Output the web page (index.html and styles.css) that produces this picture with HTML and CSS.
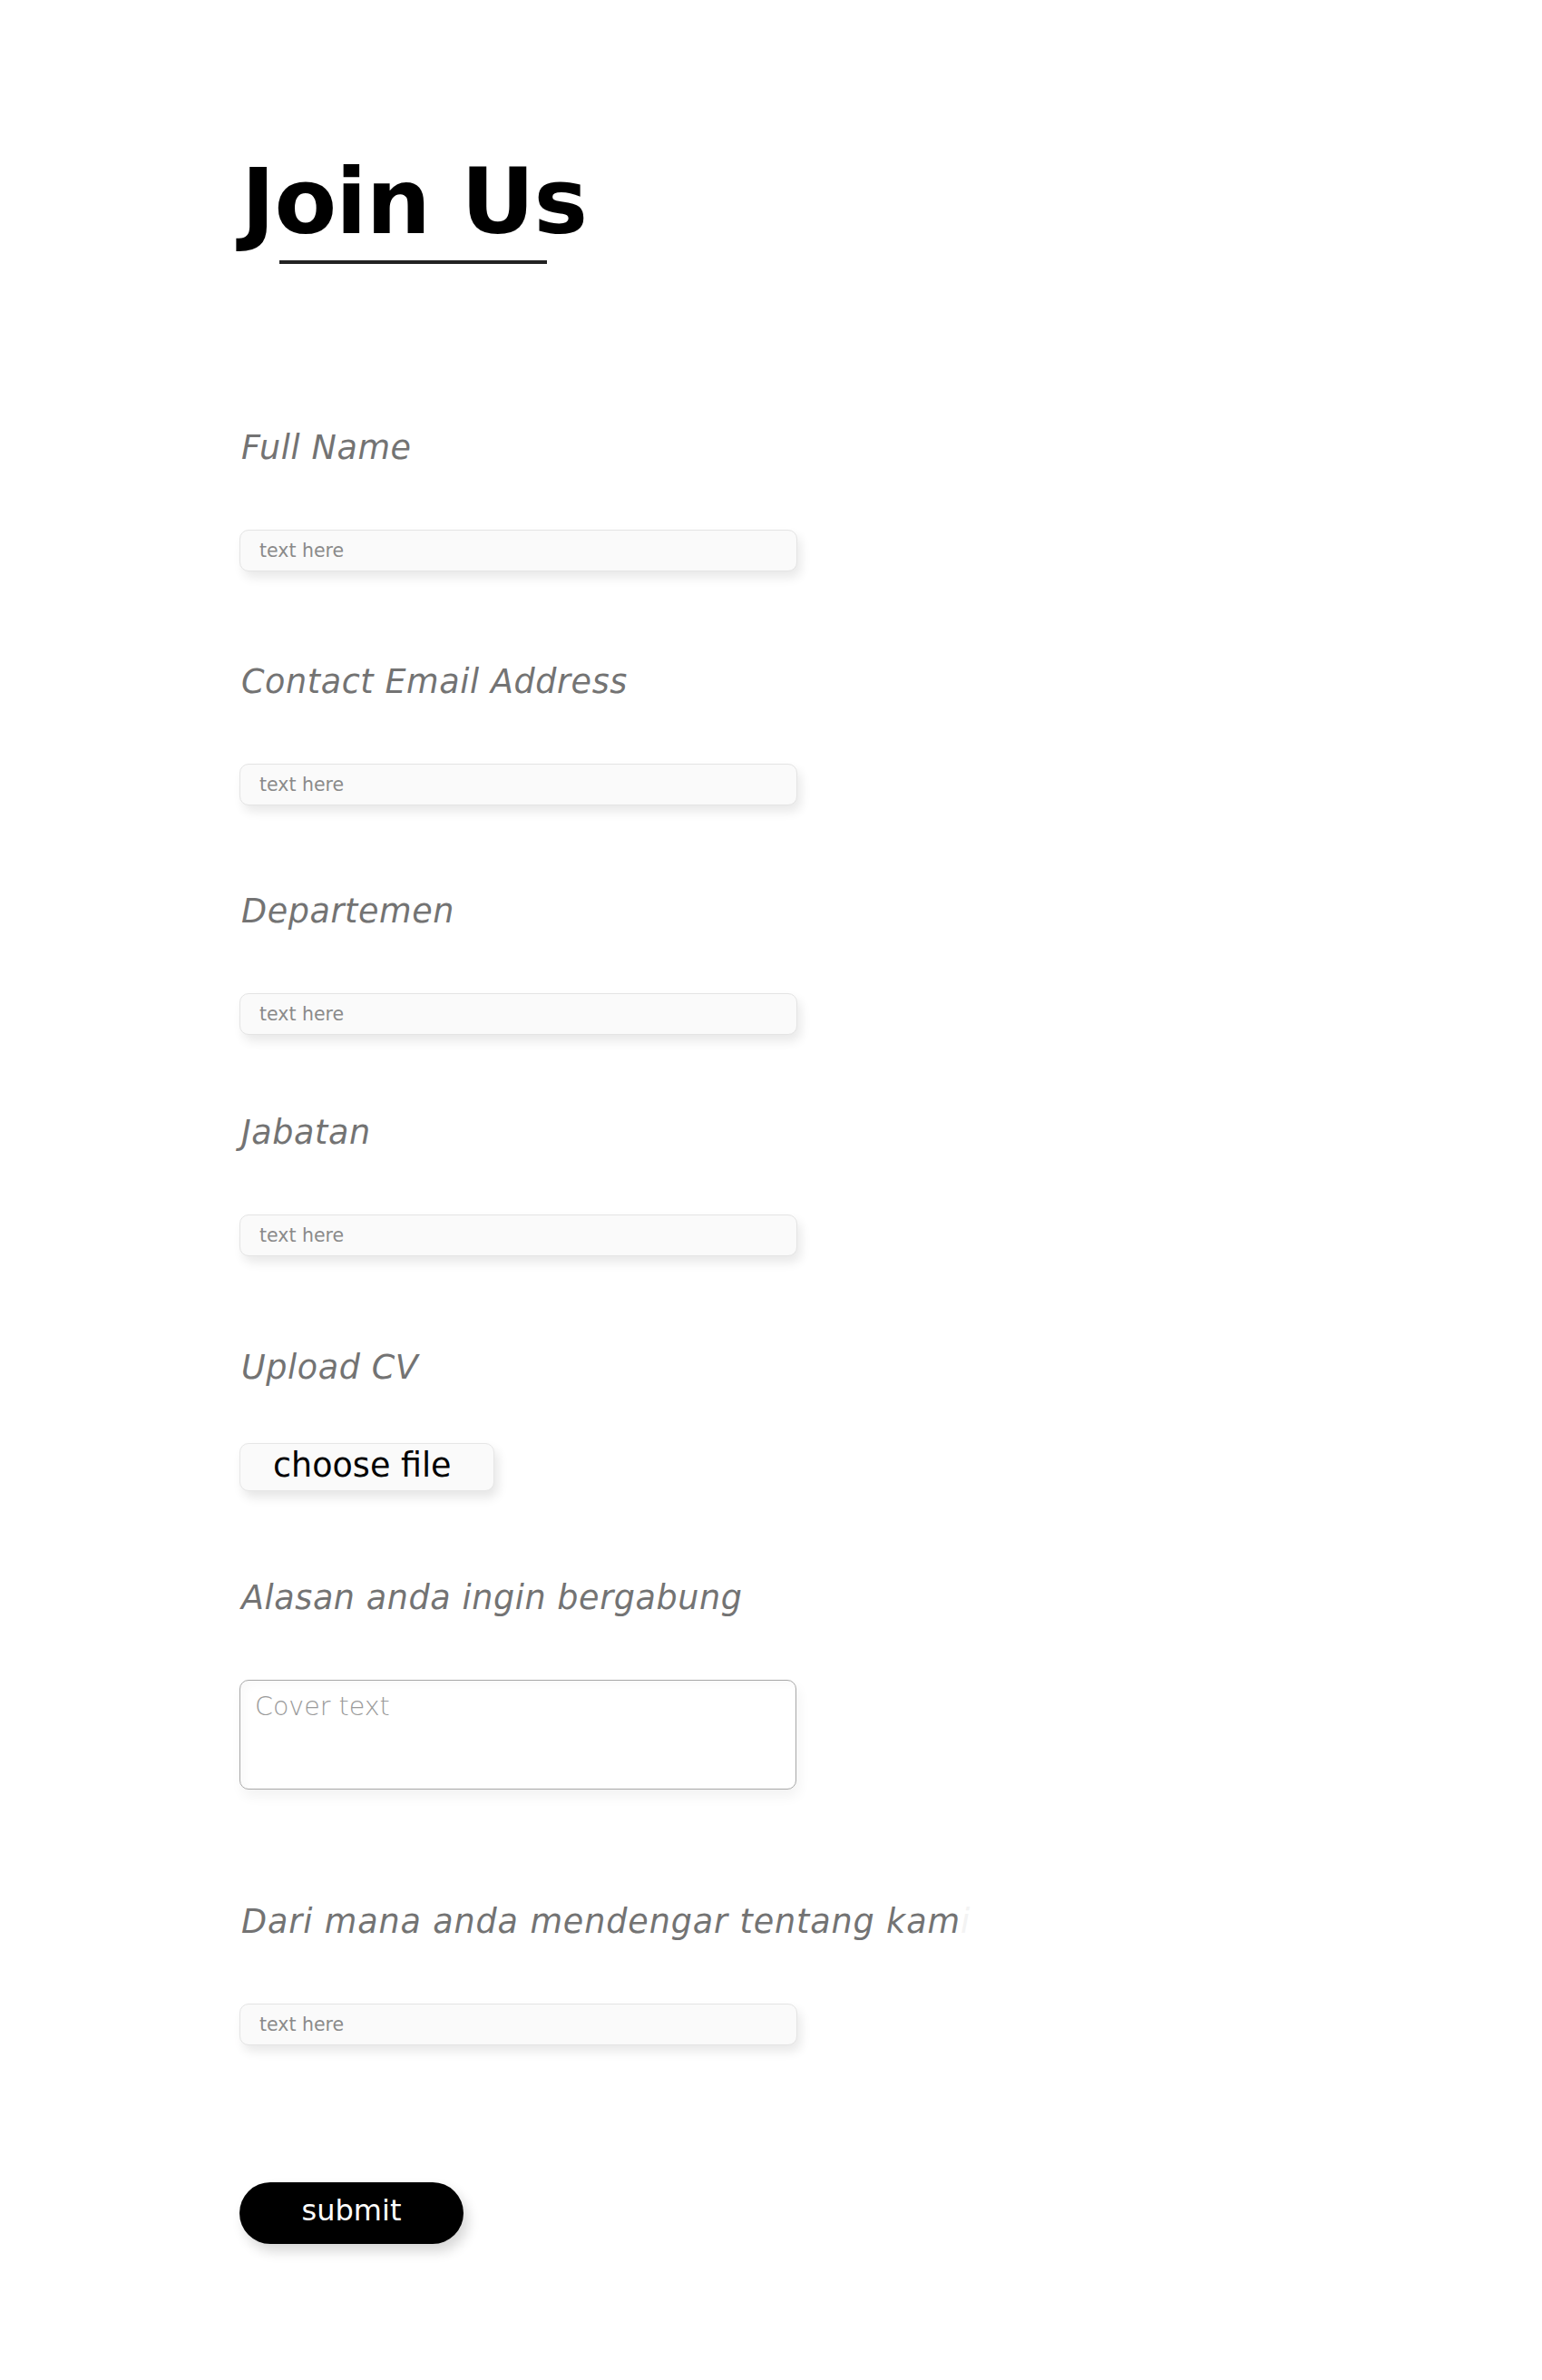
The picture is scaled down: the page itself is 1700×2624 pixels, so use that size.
FILE: index.html
```html
<!DOCTYPE html>
<html lang="id">
<head>
<meta charset="utf-8">
<title>Join Us</title>
<link rel="stylesheet" href="styles.css">
</head>
<body>
<main class="page">
  <h1 class="title">Join Us</h1>
  <div class="title-rule"></div>

  <form class="form">
    <div class="field field--first">
      <label class="field-label" for="name">Full Name</label>
      <input class="text-input" id="name" type="text" placeholder="text here">
    </div>

    <div class="field field--email">
      <label class="field-label" for="email">Contact Email Address</label>
      <input class="text-input" id="email" type="email" placeholder="text here">
    </div>

    <div class="field field--dept">
      <label class="field-label" for="dept">Departemen</label>
      <input class="text-input" id="dept" type="text" placeholder="text here">
    </div>

    <div class="field field--role">
      <label class="field-label" for="role">Jabatan</label>
      <input class="text-input" id="role" type="text" placeholder="text here">
    </div>

    <div class="field field--cv">
      <span class="field-label field-label--short">Upload CV</span>
      <label class="file-btn">choose file<input class="file-input" type="file"></label>
    </div>

    <div class="field field--reason">
      <label class="field-label" for="reason">Alasan anda ingin bergabung</label>
      <textarea class="text-area" id="reason" placeholder="Cover text"></textarea>
    </div>

    <div class="field field--source">
      <label class="field-label field-label--long" for="source">Dari mana anda mendengar tentang kam<span class="fade">i</span></label>
      <input class="text-input" id="source" type="text" placeholder="text here">
    </div>

    <button class="submit-btn" type="button">submit</button>
  </form>
</main>
</body>
</html>
```

FILE: styles.css
```css
* {
  box-sizing: border-box;
}

html, body {
  margin: 0;
  background: #ffffff;
}

body {
  font-family: "DejaVu Sans", "Noto Sans", sans-serif;
  color: #000;
}

.page {
  padding: 173px 0 120px 264px;
}

.title {
  margin: 0 0 0 2px;
  font-family: "DejaVu Sans", sans-serif;
  font-weight: 700;
  font-size: 100px;
  line-height: 100px;
  letter-spacing: -0.8px;
  color: #000;
}

.title-rule {
  width: 295px;
  height: 4px;
  margin: 14px 0 0 44px;
  background: #222222;
}

.form {
  display: flex;
  flex-direction: column;
  align-items: flex-start;
}

.field {
  display: flex;
  flex-direction: column;
  align-items: flex-start;
}

.field--first { margin-top: 181px; }
.field--email { margin-top: 100px; }
.field--dept { margin-top: 95px; }
.field--role { margin-top: 86px; }
.field--cv { margin-top: 101px; }
.field--reason { margin-top: 96px; }
.field--source { margin-top: 124px; }

.field-label {
  display: block;
  height: 44px;
  margin: 0 0 68px 2px;
  font-family: "DejaVu Sans", sans-serif;
  font-style: italic;
  font-weight: 400;
  font-size: 36.5px;
  line-height: 44px;
  letter-spacing: 0.6px;
  color: #737373;
  white-space: nowrap;
}

.field-label--short {
  margin-bottom: 61px;
}

.field-label--long {
  letter-spacing: 0.9px;
}

.fade {
  color: #f3f3f3;
}

.text-input {
  display: block;
  width: 615px;
  height: 46px;
  margin: 0;
  padding: 0 21px;
  border: 1px solid #e4e4e4;
  border-radius: 10px;
  background: #fafafa;
  box-shadow: 4px 7px 12px rgba(0, 0, 0, 0.09);
  font-family: "DejaVu Sans", sans-serif;
  font-size: 20.5px;
  color: #333;
  outline: none;
}

.text-input::placeholder {
  color: #8a8a8a;
  opacity: 1;
}

.file-btn {
  display: flex;
  align-items: center;
  width: 281px;
  height: 53px;
  padding: 0 0 2px 36px;
  border: 1px solid #e6e6e6;
  border-radius: 10px;
  background: #fafafa;
  box-shadow: 4px 7px 12px rgba(0, 0, 0, 0.1);
  font-family: "DejaVu Sans", sans-serif;
  font-size: 36.5px;
  line-height: 1;
  color: #000;
  cursor: pointer;
}

.file-input {
  display: none;
}

.text-area {
  display: block;
  width: 614px;
  height: 121px;
  margin: 0;
  padding: 12px 16px;
  border: 1px solid #a8a8a8;
  border-radius: 10px;
  background: #ffffff;
  box-shadow: inset 6px 4px 10px rgba(0, 0, 0, 0.025), 3px 8px 14px rgba(0, 0, 0, 0.05);
  font-family: "DejaVu Sans", sans-serif;
  font-weight: 200;
  font-size: 28.5px;
  line-height: 34px;
  color: #333;
  resize: none;
  outline: none;
}

.text-area::placeholder {
  color: #9a9a9a;
  opacity: 1;
}

.submit-btn {
  display: flex;
  align-items: center;
  justify-content: center;
  width: 247px;
  height: 68px;
  margin-top: 151px;
  padding: 0 0 6px 0;
  border: none;
  border-radius: 34px;
  background: #000000;
  box-shadow: 5px 8px 14px rgba(0, 0, 0, 0.16);
  font-family: "DejaVu Sans", sans-serif;
  font-size: 32px;
  line-height: 1;
  color: #ffffff;
  cursor: pointer;
}
```
